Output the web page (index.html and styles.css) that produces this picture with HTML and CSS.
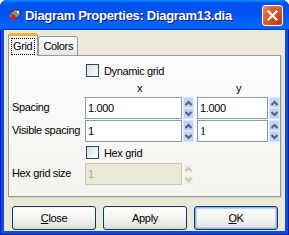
FILE: index.html
```html
<!DOCTYPE html>
<html lang="en">
<head>
    <meta charset="UTF-8">
    <title>Diagram Properties</title>
    <link rel="stylesheet" href="styles.css">
</head>
<body>
<div class="window">
    <div class="titlebar">
        <svg class="app-icon" width="16" height="16" viewBox="0 0 16 16">
            <path d="M3 6 L9 2 L14 7 L8 12 Z" fill="#8d8d8d" stroke="#3a3a3a" stroke-width="1"/>
            <path d="M2 9 L6 13 L9 11 L5 7 Z" fill="#f2f2f2" stroke="#555" stroke-width="1"/>
            <circle cx="6" cy="10" r="2.6" fill="#e21b1b"/>
            <circle cx="11" cy="5" r="1.2" fill="#ffffff"/>
        </svg>
        <span class="title">Diagram Properties: Diagram13.dia</span>
        <span class="close-btn">
            <svg width="13" height="13" viewBox="0 0 13 13">
                <path d="M2.5 2.5 L10.5 10.5 M10.5 2.5 L2.5 10.5" stroke="#fff" stroke-width="2.2" stroke-linecap="square"/>
            </svg>
        </span>
    </div>
    <div class="client">
        <div class="tabs">
            <div class="tab active"><span class="focus">Grid</span></div>
            <div class="tab">Colors</div>
        </div>
        <div class="panel">
            <div class="form-grid">
                <!-- dynamic grid -->
                <span></span>
                <label class="check-cell"><span class="checkbox"></span>Dynamic grid</label>

                <!-- axis labels -->
                <span></span>
                <span class="axis">x</span>
                <span class="axis">y</span>

                <span class="label">Spacing</span>
                <div class="field">
                    <span class="entry">1.000</span>
                    <span class="spin"><span class="up"></span><span class="down"></span></span>
                </div>
                <div class="field">
                    <span class="entry">1.000</span>
                    <span class="spin"><span class="up"></span><span class="down"></span></span>
                </div>

                <span class="label">Visible spacing</span>
                <div class="field">
                    <span class="entry">1</span>
                    <span class="spin"><span class="up"></span><span class="down"></span></span>
                </div>
                <div class="field">
                    <span class="entry serif">1</span>
                    <span class="spin"><span class="up"></span><span class="down"></span></span>
                </div>

                <span></span>
                <label class="check-cell hex"><span class="checkbox"></span>Hex grid</label>

                <span class="label">Hex grid size</span>
                <div class="field disabled">
                    <span class="entry">1</span>
                    <span class="spin"><span class="up"></span><span class="down"></span></span>
                </div>
            </div>
        </div>
        <div class="buttons">
            <button class="btn"><u>C</u>lose</button>
            <button class="btn">Apply</button>
            <button class="btn default"><u>O</u>K</button>
        </div>
    </div>
</div>
</body>
</html>
```

FILE: styles.css
```css
body {
    margin: 0;
    background: #ffffff;
}

.window {
    width: 289px;
    height: 235px;
    display: flex;
    flex-direction: column;
    background: #0a4de0;
    box-shadow: inset 1px 0 0 #0019cf, inset -1px 0 0 #001ea0, inset 0 -1px 0 #001ea0;
    border-radius: 7px 7px 0 0;
    overflow: hidden;
    font-family: "Liberation Sans", "DejaVu Sans", sans-serif;
    font-size: 11px;
    letter-spacing: -0.35px;
    color: #000;
}

.titlebar {
    height: 30px;
    flex: none;
    display: flex;
    align-items: center;
    padding: 0 6px 0 7px;
    background: linear-gradient(to bottom, #0997ff, #0053ee 10%, #0050ee 40%, #0066ff 86%, #0066ff 92%, #005bff 95%, #003dd7 97%, #003dd7);
    border-radius: 7px 7px 0 0;
}

.app-icon {
    flex: none;
    margin-right: 2px;
}

.title {
    font-weight: bold;
    font-size: 13px;
    color: #ffffff;
    text-shadow: 1px 1px 0 #0a1883;
    letter-spacing: -0.3px;
    white-space: nowrap;
}

.close-btn {
    margin-left: auto;
    width: 19px;
    height: 19px;
    border: 1px solid #ffffff;
    border-radius: 3px;
    background: radial-gradient(circle at 85% 85%, #c43c00 0%, #d95a25 55%, #e8876a 100%);
    display: flex;
    align-items: center;
    justify-content: center;
    margin-top: 1px;
}

.client {
    flex: 1;
    margin: 0 4px 4px 4px;
    background: #ece9d8;
    padding: 3px 4px 0 4px;
    display: flex;
    flex-direction: column;
}

.tabs {
    display: flex;
    align-items: flex-end;
    height: 22px;
    position: relative;
    z-index: 1;
}

.tab {
    height: 18px;
    padding: 0 4px;
    border: 1px solid #919b9c;
    border-bottom: none;
    border-radius: 3px 3px 0 0;
    background: linear-gradient(to bottom, #ffffff, #f3f3ef 60%, #e6e5df);
    display: flex;
    align-items: center;
    line-height: 13px;
}

.tab.active {
    padding: 0 3px;
    border-top: 3px solid #f6b03c;
    height: 20px;
    background: #fcfcfe;
    margin-bottom: -1px;
}

.focus {
    outline: 1px dotted #000;
    padding: 1px 2px 1px 1px;
    line-height: 13px;
}

.panel {
    height: 132px;
    border: 1px solid #919b9c;
    background: linear-gradient(to bottom, #fcfcfe, #f4f3ee);
    padding: 8px 0 0 3px;
    box-shadow: 1px 1px 0 #d0cec1;
}

.form-grid {
    display: grid;
    grid-template-columns: 70px 109px 83px;
    grid-template-rows: 13px 20px 23px 23px 20px 22px;
    column-gap: 3px;
}

.check-cell {
    grid-column: 2 / 4;
    display: flex;
    align-items: center;
    gap: 5px;
    margin-left: 1px;
}

.check-cell.hex {
    align-self: start;
    margin-top: 3px;
    height: 13px;
}

.checkbox {
    width: 11px;
    height: 11px;
    border: 1px solid #1c5180;
    background: linear-gradient(135deg, #dcdcd7, #ffffff);
    flex: none;
}

.axis {
    text-align: center;
    align-self: end;
    line-height: 11px;
    padding-bottom: 3px;
}

.label {
    align-self: start;
    line-height: 20px;
    white-space: nowrap;
}

.field {
    display: flex;
    height: 22px;
    align-self: start;
}

.entry {
    flex: 1;
    border: 1px solid #7f9db9;
    background: #ffffff;
    padding: 0 2px;
    line-height: 20px;
}

.entry.serif {
    font-family: "Liberation Serif", serif;
    font-size: 12px;
}

.spin {
    width: 11px;
    margin-left: 1px;
    display: flex;
    flex-direction: column;
}

.spin > span {
    flex: 1;
    background-color: #c1d3fb;
    background-repeat: no-repeat;
    background-position: center;
    border-radius: 1px;
    border: 1px solid #dce6fc;
}

.spin > .up {
    background-image: url("data:image/svg+xml;utf8,<svg xmlns='http://www.w3.org/2000/svg' width='9' height='6'><polyline points='1.5,5 4.5,2 7.5,5' fill='none' stroke='%234d6185' stroke-width='2'/></svg>");
}

.spin > .down {
    background-image: url("data:image/svg+xml;utf8,<svg xmlns='http://www.w3.org/2000/svg' width='9' height='6'><polyline points='1.5,1 4.5,4 7.5,1' fill='none' stroke='%234d6185' stroke-width='2'/></svg>");
}

.field.disabled .entry {
    background: #ebe8d7;
    border-color: #c9c7ba;
    color: #aca899;
}

.field.disabled .spin > span {
    background-color: #f0efe9;
    border-color: #f7f6f2;
}

.field.disabled .spin > .up {
    background-image: url("data:image/svg+xml;utf8,<svg xmlns='http://www.w3.org/2000/svg' width='9' height='6'><polyline points='1.5,5 4.5,2 7.5,5' fill='none' stroke='%23c9c7ba' stroke-width='2'/></svg>");
}

.field.disabled .spin > .down {
    background-image: url("data:image/svg+xml;utf8,<svg xmlns='http://www.w3.org/2000/svg' width='9' height='6'><polyline points='1.5,1 4.5,4 7.5,1' fill='none' stroke='%23c9c7ba' stroke-width='2'/></svg>");
}

.buttons {
    display: flex;
    gap: 7px;
    padding: 9px 0 0 4px;
}

.btn {
    width: 84px;
    height: 24px;
    border: 1px solid #003c74;
    border-radius: 3px;
    background: linear-gradient(to bottom, #ffffff, #f4f4f0 50%, #e6e5dd 90%, #d6d0c5);
    font-family: "Liberation Sans", "DejaVu Sans", sans-serif;
    font-size: 11px;
    letter-spacing: -0.35px;
    color: #000;
    padding: 0;
}

.btn.default {
    box-shadow: inset 0 0 0 1px #97aef4, inset 0 0 0 2px #b9d1fb;
}
```
